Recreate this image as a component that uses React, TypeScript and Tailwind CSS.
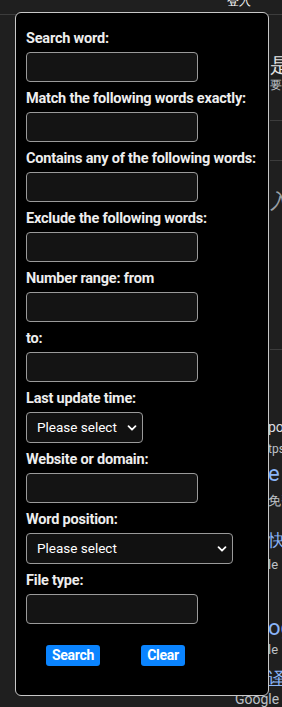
import React from 'react';

const fields = [
  { label: 'Search word:', kind: 'input' },
  { label: 'Match the following words exactly:', kind: 'input' },
  { label: 'Contains any of the following words:', kind: 'input' },
  { label: 'Exclude the following words:', kind: 'input' },
  { label: 'Number range: from', kind: 'input' },
  { label: 'to:', kind: 'input' },
  { label: 'Last update time:', kind: 'select-sm' },
  { label: 'Website or domain:', kind: 'input' },
  { label: 'Word position:', kind: 'select-lg' },
  { label: 'File type:', kind: 'input' },
];

const Chevron = () => (
  <svg width="10" height="10" viewBox="0 0 10 10" className="shrink-0">
    <path d="M1.5 3.2 L5 6.7 L8.5 3.2" fill="none" stroke="#ffffff" strokeWidth="1.8" strokeLinecap="round" strokeLinejoin="round" />
  </svg>
);

const FakeSelect: React.FC<{ wide?: boolean }> = ({ wide }) => (
  <div
    className={`h-[31px] ${wide ? 'w-[207px]' : 'w-[117px]'} rounded-[4px] border border-[#9a9a9a] bg-[#111111] flex items-center justify-between pl-[10px] pr-[5px] text-[13.5px] text-white`}
  >
    <span>Please select</span>
    <Chevron />
  </div>
);

const Background = () => (
  <div className="absolute inset-0 bg-[#1f1f1f] font-['Roboto',sans-serif]">
    <div className="h-[15px] border-b border-[#3c3c3c] relative">
      <span className="absolute left-[227px] -top-[8px] text-[12px] text-white">登入</span>
    </div>
    <div className="ml-[270px] text-[#e3e3e3] whitespace-nowrap">
      <div className="mt-[38px] text-[20px] leading-[24px]">是</div>
      <div className="text-[12px] leading-[16px] text-[#bdc1c6]">要：</div>
      <div className="mt-[27px] border-t border-[#3c3c3c]" />
      <div className="mt-[39px] border-t border-[#3c3c3c]" />
      <div className="mt-[28px] text-[20px] leading-[24px] text-[#9aa0a6]">入</div>
      <div className="mt-[136px] border-t border-[#3c3c3c]" />
    </div>
    <div className="absolute left-[268px] top-[420px] text-[#dadce0] leading-none whitespace-nowrap">
      <div className="text-[14px] h-[23px]">poo</div>
      <div className="text-[12px] h-[20px] text-[#bdc1c6]">tps</div>
      <div className="text-[22px] h-[31px] text-[#8ab4f8]">e</div>
      <div className="text-[13px] h-[38px] text-[#bdc1c6]">免费</div>
      <div className="text-[17px] h-[26px] text-[#8ab4f8]">快</div>
      <div className="text-[13px] h-[59px] text-[#bdc1c6]">le</div>
      <div className="text-[22px] h-[26px] text-[#8ab4f8]">og</div>
      <div className="text-[13px] h-[27px] text-[#bdc1c6]">le</div>
      <div className="text-[17px] h-[20px] text-[#8ab4f8] underline">译一</div>
    </div>
    <div className="absolute left-[235px] top-[689px] text-[14px] text-[#bdc1c6]">Google</div>
  </div>
);

export default function App() {
  return (
    <div className="relative w-[282px] h-[707px] overflow-hidden">
      <Background />
      <div className="absolute left-[15px] top-[12px] w-[254px] h-[684px] rounded-[6px] border border-[#c8c8c8] bg-black pt-[15px] pl-[10px] font-['Roboto',sans-serif]">
        {fields.map((f) => (
          <div key={f.label} className="flex flex-col">
            <div className="h-[20px] leading-[21px] text-[14.5px] font-bold text-[#eeeeee] whitespace-nowrap tracking-[-0.2px]">
              {f.label}
            </div>
            <div className="mt-[4px] mb-[6px]">
              {f.kind === 'input' && (
                <div className="h-[30px] w-[172px] rounded-[4px] border border-[#9a9a9a] bg-[#141414]" />
              )}
              {f.kind === 'select-sm' && <FakeSelect />}
              {f.kind === 'select-lg' && <FakeSelect wide />}
            </div>
          </div>
        ))}
        <div className="flex mt-[15px] pl-[20px] gap-[41px]">
          <button className="h-[21px] w-[54px] rounded-[3px] bg-[#0a84ff] text-white text-[14px] font-bold leading-[21px] tracking-[-0.3px]">
            Search
          </button>
          <button className="h-[21px] w-[44px] rounded-[3px] bg-[#0a84ff] text-white text-[14px] font-bold leading-[21px] tracking-[-0.3px]">
            Clear
          </button>
        </div>
      </div>
    </div>
  );
}
